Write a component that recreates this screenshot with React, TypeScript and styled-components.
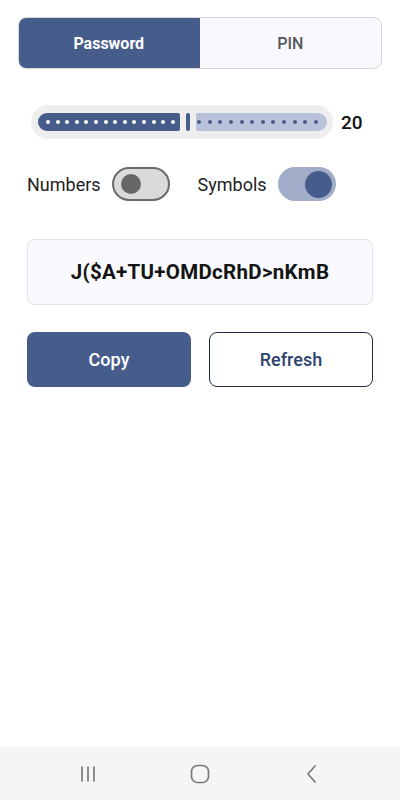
import React from 'react';
import styled, { createGlobalStyle } from 'styled-components';

const PRIMARY = '#465d8c';
const MEDIUM = "'Roboto Medium', Roboto, 'Noto Sans', sans-serif";

const GlobalStyle = createGlobalStyle`
  html, body {
    margin: 0;
    padding: 0;
    background: #ffffff;
    font-family: Roboto, 'Noto Sans', sans-serif;
  }
  * { box-sizing: border-box; }
`;

const Screen = styled.div`
  width: 400px;
  height: 800px;
  display: flex;
  flex-direction: column;
  background: #fff;
`;

const Content = styled.main`
  flex: 1;
  display: flex;
  flex-direction: column;
  padding: 17px 27px 0 27px;
`;

const Segmented = styled.div`
  display: flex;
  margin: 0 -9px;
  height: 52px;
  border: 1px solid #d6d6dc;
  border-radius: 8px;
  background: #f9f9fd;
  overflow: hidden;
`;

const Segment = styled.button<{ active?: boolean }>`
  flex: 1;
  border: none;
  margin: ${({ active }) => (active ? '-1px 0 -1px -1px' : '0')};
  border-radius: ${({ active }) => (active ? '8px 0 0 8px' : '0')};
  background: ${({ active }) => (active ? PRIMARY : 'transparent')};
  color: ${({ active }) => (active ? '#ffffff' : '#555860')};
  font-family: ${({ active }) => (active ? 'Roboto, sans-serif' : MEDIUM)};
  font-size: 16px;
  font-weight: ${({ active }) => (active ? 700 : 400)};
`;

const SliderRow = styled.div`
  display: flex;
  align-items: center;
  margin: 36px 0 0 4px;
`;

const SliderShell = styled.div`
  width: 302px;
  height: 34px;
  padding: 8px 6px 8px 7px;
  border-radius: 17px;
  background: #eeeeef;
  display: flex;
  align-items: center;
`;

const Track = styled.div<{ active?: boolean }>`
  height: 18px;
  display: flex;
  align-items: center;
  justify-content: space-between;
  background: ${({ active }) => (active ? PRIMARY : '#b8c2d8')};
  border-radius: ${({ active }) => (active ? '9px 2px 2px 9px' : '2px 9px 9px 2px')};
  padding: ${({ active }) => (active ? '0 5px 0 8px' : '0 9px 0 0')};
`;

const Dot = styled.span<{ active?: boolean }>`
  width: 4px;
  height: 4px;
  border-radius: 50%;
  background: ${({ active }) => (active ? '#ffffff' : PRIMARY)};
`;

const Thumb = styled.div`
  width: 4px;
  height: 18px;
  margin: 0 6px;
  border-radius: 2px;
  background: ${PRIMARY};
`;

const SliderValue = styled.span`
  margin-left: 8px;
  font-family: ${MEDIUM};
  font-size: 19px;
  color: #111;
`;

const ToggleRow = styled.div`
  display: flex;
  align-items: center;
  margin-top: 28px;
`;

const ToggleLabel = styled.span`
  font-size: 18px;
  color: #222;
  margin-right: 11px;
`;

const Switch = styled.div<{ on?: boolean }>`
  width: 58px;
  height: 34px;
  border-radius: 17px;
  display: flex;
  align-items: center;
  justify-content: ${({ on }) => (on ? 'flex-end' : 'flex-start')};
  padding: ${({ on }) => (on ? '0 4px' : '0 7px')};
  background: ${({ on }) => (on ? '#a1acc9' : '#dadada')};
  border: ${({ on }) => (on ? 'none' : '2px solid #6b6b6b')};
  margin-right: ${({ on }) => (on ? '0' : '28px')};
`;

const Knob = styled.span<{ on?: boolean }>`
  width: ${({ on }) => (on ? '27px' : '20px')};
  height: ${({ on }) => (on ? '27px' : '20px')};
  border-radius: 50%;
  background: ${({ on }) => (on ? PRIMARY : '#666666')};
`;

const PasswordBox = styled.div`
  margin-top: 38px;
  height: 66px;
  border: 1px solid #e1e1e8;
  border-radius: 8px;
  background: #f9f9fe;
  display: flex;
  align-items: center;
  justify-content: center;
  font-size: 20.5px;
  font-weight: 700;
  color: #141414;
  letter-spacing: 0.3px;
`;

const Actions = styled.div`
  margin-top: 27px;
  display: grid;
  grid-template-columns: 1fr 1fr;
  gap: 18px;
`;

const ActionButton = styled.button<{ primary?: boolean }>`
  height: 55px;
  border-radius: 8px;
  font-family: ${MEDIUM};
  font-size: 18px;
  font-weight: 400;
  background: ${({ primary }) => (primary ? PRIMARY : '#ffffff')};
  color: ${({ primary }) => (primary ? '#ffffff' : '#2f4570')};
  border: ${({ primary }) => (primary ? 'none' : '1px solid #1e2a44')};
`;

const NavBar = styled.nav`
  height: 53px;
  background: #f5f5f5;
  display: flex;
  align-items: center;
  justify-content: space-between;
  padding: 0 76px;
`;

const NavIcon = styled.svg`
  width: 24px;
  height: 24px;
  stroke: #7a7a7a;
  fill: none;
  stroke-width: 1.7;
  stroke-linecap: round;
  stroke-linejoin: round;
`;

export default function App() {
  const activeDots = Array.from({ length: 14 });
  const inactiveDots = Array.from({ length: 12 });

  return (
    <Screen>
      <GlobalStyle />
      <Content>
        <Segmented>
          <Segment active>Password</Segment>
          <Segment>PIN</Segment>
        </Segmented>

        <SliderRow>
          <SliderShell>
            <Track active style={{ width: 142 }}>
              {activeDots.map((_, i) => (
                <Dot key={i} active />
              ))}
            </Track>
            <Thumb />
            <Track style={{ width: 131, paddingLeft: 1 }}>
              {inactiveDots.map((_, i) => (
                <Dot key={i} />
              ))}
            </Track>
          </SliderShell>
          <SliderValue>20</SliderValue>
        </SliderRow>

        <ToggleRow>
          <ToggleLabel>Numbers</ToggleLabel>
          <Switch>
            <Knob />
          </Switch>
          <ToggleLabel>Symbols</ToggleLabel>
          <Switch on>
            <Knob on />
          </Switch>
        </ToggleRow>

        <PasswordBox>J($A+TU+OMDcRhD&gt;nKmB</PasswordBox>

        <Actions>
          <ActionButton primary>Copy</ActionButton>
          <ActionButton>Refresh</ActionButton>
        </Actions>
      </Content>

      <NavBar>
        <NavIcon viewBox="0 0 24 24">
          <path d="M6 5v14M12 5v14M18 5v14" />
        </NavIcon>
        <NavIcon viewBox="0 0 24 24">
          <rect x="3.5" y="3.5" width="17" height="17" rx="6" />
        </NavIcon>
        <NavIcon viewBox="0 0 24 24">
          <path d="M15 4l-7 8 7 8" />
        </NavIcon>
      </NavBar>
    </Screen>
  );
}
